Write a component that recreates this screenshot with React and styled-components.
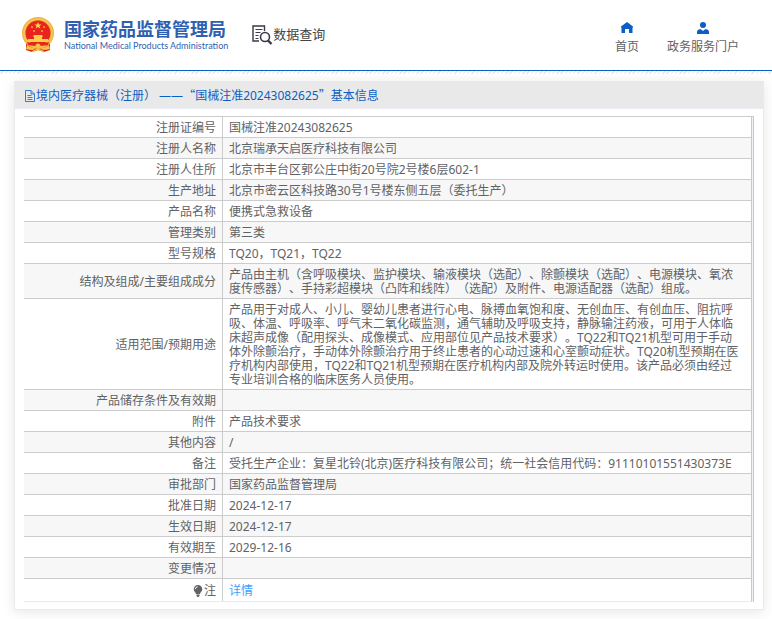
import React from 'react';
import styled, { createGlobalStyle } from 'styled-components';

const rows = [
  { label: '注册证编号', value: '国械注准20243082625' },
  { label: '注册人名称', value: '北京瑞承天启医疗科技有限公司' },
  { label: '注册人住所', value: '北京市丰台区郭公庄中街20号院2号楼6层602-1' },
  { label: '生产地址', value: '北京市密云区科技路30号1号楼东侧五层（委托生产）' },
  { label: '产品名称', value: '便携式急救设备' },
  { label: '管理类别', value: '第三类' },
  { label: '型号规格', value: 'TQ20，TQ21，TQ22' },
  {
    label: '结构及组成/主要组成成分',
    value: '产品由主机（含呼吸模块、监护模块、输液模块（选配）、除颤模块（选配）、电源模块、氧浓度传感器）、手持彩超模块（凸阵和线阵）（选配）及附件、电源适配器（选配）组成。',
  },
  {
    label: '适用范围/预期用途',
    value: '产品用于对成人、小儿、婴幼儿患者进行心电、脉搏血氧饱和度、无创血压、有创血压、阻抗呼吸、体温、呼吸率、呼气末二氧化碳监测，通气辅助及呼吸支持，静脉输注药液，可用于人体临床超声成像（配用探头、成像模式、应用部位见产品技术要求）。TQ22和TQ21机型可用于手动体外除颤治疗，手动体外除颤治疗用于终止患者的心动过速和心室颤动症状。TQ20机型预期在医疗机构内部使用，TQ22和TQ21机型预期在医疗机构内部及院外转运时使用。该产品必须由经过专业培训合格的临床医务人员使用。',
  },
  { label: '产品储存条件及有效期', value: '' },
  { label: '附件', value: '产品技术要求' },
  { label: '其他内容', value: '/' },
  { label: '备注', value: '受托生产企业：复星北铃(北京)医疗科技有限公司；统一社会信用代码：91110101551430373E' },
  { label: '审批部门', value: '国家药品监督管理局' },
  { label: '批准日期', value: '2024-12-17' },
  { label: '生效日期', value: '2024-12-17' },
  { label: '有效期至', value: '2029-12-16' },
  { label: '变更情况', value: '' },
];

const Emblem = () => (
  <svg width="34" height="36" viewBox="0 0 34 36" aria-hidden="true">
    <path d="M5 25 L5 33 L11 35 L17 33 L23 35 L29 33 L29 25 Z" fill="#d9231d" />
    <circle cx="17" cy="16" r="16" fill="#efb23a" />
    <circle cx="17" cy="16" r="14" fill="none" stroke="#f4c455" strokeWidth="2" />
    <circle cx="17" cy="16" r="12.500" fill="#e8241d" />
    <path d="M17 5l1 2.400h2.500l-2 1.600.8 2.500L17 10l-2.300 1.500.8-2.500-2-1.600H16z" fill="#fbd84b" />
    <g fill="#f6a63a">
      <circle cx="11" cy="10" r="1" />
      <circle cx="23" cy="10" r="1" />
      <circle cx="13" cy="14" r="1" />
      <circle cx="21" cy="14" r="1" />
    </g>
    <path d="M13 18h8l1 2h-1v2h6l1 3H6l1-3h6v-2h-1z" fill="#f9cf4c" />
    <path d="M6 25q11 3 22 0l-1 3q-10 2-20 0z" fill="#e8241d" />
    <circle cx="17" cy="29" r="2.500" fill="#f5c243" />
    <path d="M6 28q5 4 9 2l-3 3q-4 0-7-1zM28 28q-5 4-9 2l3 3q4 0 7-1z" fill="#f5c243" />
    <path d="M11 35q6-5 12 0" fill="none" stroke="#f5c243" strokeWidth="1.500" />
  </svg>
);

const SearchDocIcon = () => (
  <svg width="21" height="20" viewBox="0 0 21 20" fill="none" stroke="#39394a" aria-hidden="true">
    <path d="M12.500 6V1H1v15h6" strokeWidth="1.400" />
    <path d="M3.500 4.500h7M3.500 7.500h5M3.500 10.500h3M3.500 13.500h3" strokeWidth="1" />
    <circle cx="13" cy="12" r="4.500" strokeWidth="1.600" />
    <path d="M16 15.500l3.500 3.500" strokeWidth="2.400" />
  </svg>
);

const HomeIcon = () => (
  <svg width="12" height="12" viewBox="0 0 12 12" fill="#0a5fc4" aria-hidden="true">
    <path d="M6 0l6 4.600V5.500h-.500V11H8V7H4v4H.500V5.500H0v-.900z" />
  </svg>
);

const UserIcon = () => (
  <svg width="12" height="12" viewBox="0 0 12 12" fill="#0a5fc4" aria-hidden="true">
    <circle cx="6" cy="3" r="3" />
    <path d="M0 12V10q0-2.500 3.500-3L6 9l2.500-2Q12 7.500 12 10v2z" />
  </svg>
);

const DocIcon = () => (
  <svg width="12" height="12" viewBox="0 0 12 12" fill="none" stroke="currentColor" strokeWidth=".8" aria-hidden="true">
    <path d="M1.500.500h5.500l3.500 3.500v7.500h-9zM7 .500v3.500h3.500M3.500 5.500h4M3.500 7.500h5M3.500 9.500h5" />
  </svg>
);

const BulbIcon = () => (
  <svg width="10" height="12" viewBox="0 0 10 12" fill="#606266" aria-hidden="true">
    <path d="M5 0a4.300 4.300 0 0 1 4.300 4.300C9.300 6.500 7.200 7.200 7 9H3C2.800 7.200.7 6.500.7 4.300A4.300 4.300 0 0 1 5 0zM3.500 9.500h3v1.500L5.500 12h-1l-1-1z" />
    <path d="M2.300 4.200Q2.500 2 4.700 1.700" stroke="#fff" fill="none" />
  </svg>
);

const App = () => {
  return (
    <>
      <GlobalStyle />
      <Header>
        <Brand href="#">
          <Emblem />
          <BrandText>
            <BrandName>国家药品监督管理局</BrandName>
            <BrandSub>National Medical Products Administration</BrandSub>
          </BrandText>
        </Brand>
        <Query href="#">
          <SearchDocIcon />
          <span>数据查询</span>
        </Query>
        <Nav>
          <NavLink href="#"><HomeIcon />首页</NavLink>
          <NavLink href="#"><UserIcon />政务服务门户</NavLink>
        </Nav>
      </Header>
      <Hatch />
      <Main>
        <Card>
          <CardTitle>
            <DocIcon />
            <span>
              境内医疗器械（注册） ——<Quote>“</Quote>国械注准20243082625<Quote>”</Quote>基本信息
            </span>
          </CardTitle>
          <TableFrame>
            <Table>
              <tbody>
                {rows.map((row) => (
                  <Row key={row.label}>
                    <Label scope="row">{row.label}</Label>
                    <Value>{row.value}</Value>
                  </Row>
                ))}
                <Row>
                  <Label scope="row" $tall>
                    <Note><BulbIcon />注</Note>
                  </Label>
                  <Value $tall><DetailLink href="#">详情</DetailLink></Value>
                </Row>
              </tbody>
            </Table>
          </TableFrame>
        </Card>
      </Main>
    </>
  );
};

export default App;

const GlobalStyle = createGlobalStyle`
  * {
    box-sizing: border-box;
  }
  body {
    margin: 0;
    background: #fff;
    color: #606266;
    font-family: "Noto Sans", "Noto Sans CJK SC", sans-serif;
    font-size: 12px;
    line-height: 14px;
    text-spacing-trim: space-all;
  }
  a {
    color: inherit;
    text-decoration: none;
  }
  svg {
    display: block;
    flex: none;
  }
`;

const Header = styled.header`
  display: flex;
  align-items: center;
  height: 71px;
  padding: 0 33px 0 21px;
  border-bottom: 1px solid #0a5fc4;
`;

const Brand = styled.a`
  display: flex;
  align-items: center;
  gap: 9px;
`;

const BrandText = styled.div`
  color: #2f5fb0;
  white-space: nowrap;
`;

const BrandName = styled.div`
  font-size: 18px;
  font-weight: 700;
  line-height: 22px;
`;

const BrandSub = styled.div`
  font-family: Lato, sans-serif;
  font-size: 9px;
  line-height: 12px;
`;

const Query = styled.a`
  display: flex;
  align-items: center;
  margin-left: 24px;
  color: #444;
  font-size: 13px;
  line-height: 20px;
  white-space: nowrap;

  span {
    padding-bottom: 3px;
  }
`;

const Nav = styled.nav`
  display: flex;
  gap: 28px;
  margin-left: auto;
  padding-top: 6px;
`;

const NavLink = styled.a`
  display: flex;
  flex-direction: column;
  align-items: center;
  gap: 6px;
  white-space: nowrap;
`;

const Hatch = styled.div`
  height: 3px;
  background: repeating-linear-gradient(135deg, #fff 0 2px, #efe6e8 2px 3px);
`;

const Main = styled.main`
  padding: 7px 8px 9px 14px;
`;

const Card = styled.section`
  padding-bottom: 7px;
  border: 1px solid #ebebef;
  border-top: none;
  box-shadow: 0 2px 12px rgba(0, 0, 0, 0.1);
`;

const CardTitle = styled.h1`
  display: flex;
  align-items: center;
  height: 28px;
  margin: 0;
  padding: 2px 9px 0;
  border-bottom: 1px solid #ebebf3;
  background: #e9e9e9;
  color: #0a5fc4;
  font-size: 12px;
  font-weight: 400;
`;

// full-width quotation marks
const Quote = styled.span`
  font-family: "Noto Sans CJK SC", sans-serif;
`;

const TableFrame = styled.div`
  margin: 7px 9px 0;
  padding-right: 1px;
  border-top: 1px solid #ccc;
  border-right: 1px solid #c8c8d0;
  background: #f0f0f6;
`;

const Table = styled.table`
  width: 100%;
  border-collapse: separate;
  border-spacing: 0;
  border-right: 1px solid #c8c8d0;
  border-bottom: 1px solid #ebebef;
  background: #fff;
`;

const Label = styled.th`
  width: 199px;
  padding: 4px 6px 2px;
  border-right: 1px solid #ccc;
  font-weight: 400;
  line-height: ${(props) => (props.$tall ? '16px' : '14px')};
  text-align: right;
`;

const Value = styled.td`
  height: 20px;
  padding: 4px 8px 2px 6px;
  line-height: ${(props) => (props.$tall ? '16px' : '14px')};
`;

const Row = styled.tr`
  &:nth-child(even) {
    background: #f7f7f7;
  }
  &:last-child {
    background: #fff;
  }
  & + & > ${Label}, & + & > ${Value} {
    border-top: 1px solid #ccc;
  }
`;

const Note = styled.span`
  display: flex;
  align-items: center;
  justify-content: flex-end;
  gap: 1px;
`;

const DetailLink = styled.a`
  color: #409eff;
`;
